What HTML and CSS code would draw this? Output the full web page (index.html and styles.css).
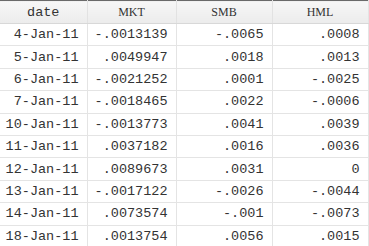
FILE: index.html
```html
<!DOCTYPE html>
<html lang="en">
<head>
    <meta charset="UTF-8">
    <title>Data browser</title>
    <link rel="stylesheet" href="styles.css">
</head>
<body>
    <table class="grid">
        <colgroup>
            <col class="c-date">
            <col class="c-mkt">
            <col class="c-smb">
            <col class="c-hml">
        </colgroup>
        <thead>
            <tr>
                <th>date</th>
                <th>MKT</th>
                <th>SMB</th>
                <th>HML</th>
            </tr>
        </thead>
        <tbody>
            <tr><td>4-Jan-11</td><td>-.0013139</td><td>-.0065</td><td>.0008</td></tr>
            <tr><td>5-Jan-11</td><td>.0049947</td><td>.0018</td><td>.0013</td></tr>
            <tr><td>6-Jan-11</td><td>-.0021252</td><td>.0001</td><td>-.0025</td></tr>
            <tr><td>7-Jan-11</td><td>-.0018465</td><td>.0022</td><td>-.0006</td></tr>
            <tr><td>10-Jan-11</td><td>-.0013773</td><td>.0041</td><td>.0039</td></tr>
            <tr><td>11-Jan-11</td><td>.0037182</td><td>.0016</td><td>.0036</td></tr>
            <tr><td>12-Jan-11</td><td>.0089673</td><td>.0031</td><td>0</td></tr>
            <tr><td>13-Jan-11</td><td>-.0017122</td><td>-.0026</td><td>-.0044</td></tr>
            <tr><td>14-Jan-11</td><td>.0073574</td><td>-.001</td><td>-.0073</td></tr>
            <tr><td>18-Jan-11</td><td>.0013754</td><td>.0056</td><td>.0015</td></tr>
        </tbody>
    </table>
</body>
</html>
```

FILE: styles.css
```css
body {
    margin: 0;
    background-color: #fff;
    overflow: hidden;
}
.grid {
    width: 368px;
    border-collapse: collapse;
    table-layout: fixed;
    font-family: "Liberation Mono", "Courier New", monospace;
    font-size: 13.5px;
    color: #333;
    border-top: 1px solid #6a6a6a;
}
.c-date { width: 87px; }
.c-mkt { width: 89px; }
.c-smb { width: 96px; }
.c-hml { width: 96px; }
th {
    height: 22px;
    padding: 0;
    font-weight: normal;
    text-align: center;
    background: linear-gradient(#f7f7f7, #ececec);
    border-right: 1px solid #e2e2e2;
    border-bottom: 1px solid #d8d8d8;
}
th:nth-child(n+2) {
    font-family: "Liberation Serif", "DejaVu Serif", serif;
    font-size: 12px;
}
td {
    height: 21.4px;
    padding: 0 8px 0 0;
    text-align: right;
    white-space: nowrap;
    border-right: 1px solid #e4e4e4;
    border-bottom: 1px solid #e4e4e4;
}
td:last-child,
th:last-child {
    border-right: 1px solid #e4e4e4;
}
```
